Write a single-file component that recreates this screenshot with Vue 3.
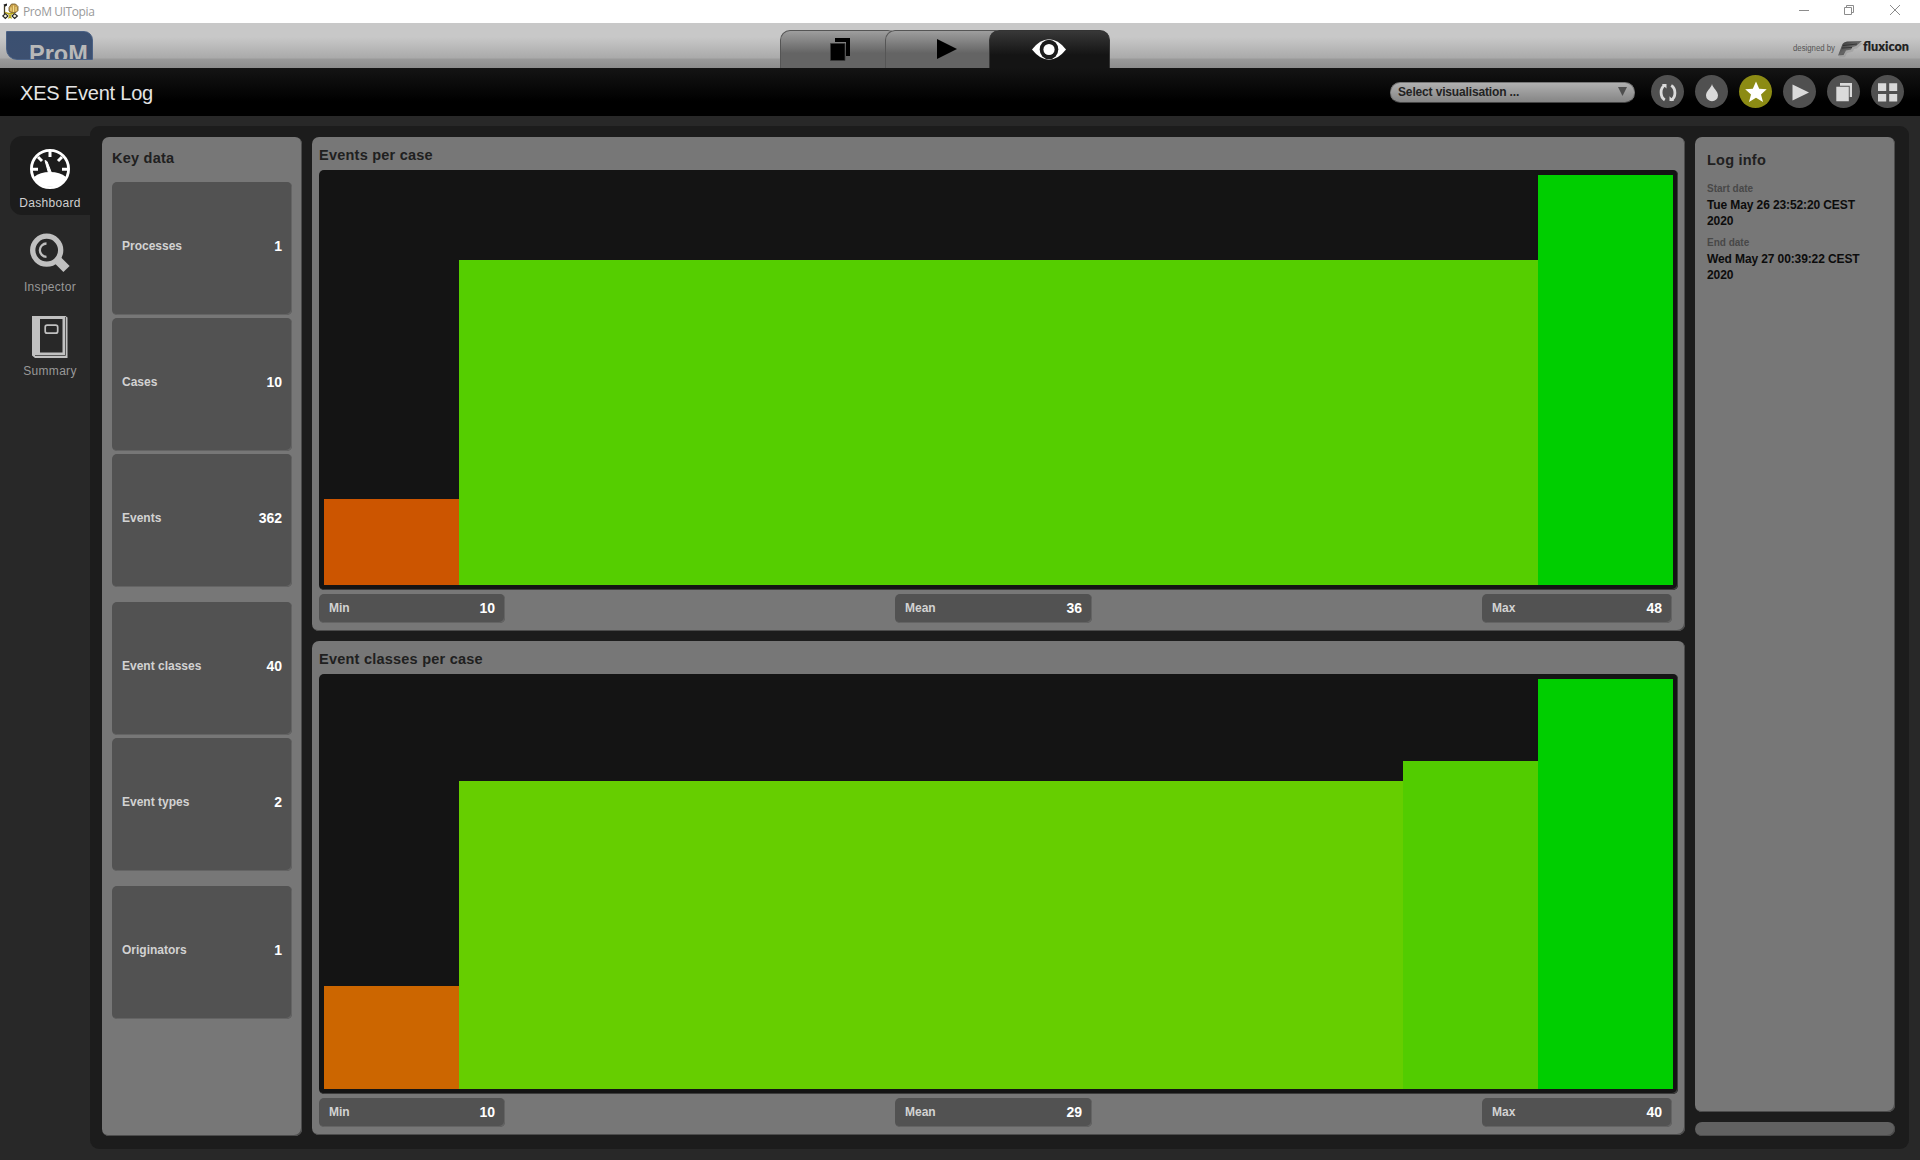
<script setup>
const groups = [
  [{ label: 'Processes', value: 1 }, { label: 'Cases', value: 10 }, { label: 'Events', value: 362 }],
  [{ label: 'Event classes', value: 40 }, { label: 'Event types', value: 2 }],
  [{ label: 'Originators', value: 1 }],
]

const charts = [
  {
    title: 'Events per case',
    bars: [
      { w: 135, h: 86, color: '#cc5500' },
      { w: 1079, h: 325, color: '#55ce00' },
      { w: 135, h: 410, color: '#00ce00' },
    ],
    min: 10, mean: 36, max: 48,
  },
  {
    title: 'Event classes per case',
    bars: [
      { w: 135, h: 103, color: '#cc6600' },
      { w: 944, h: 308, color: '#66ce00' },
      { w: 135, h: 328, color: '#52cc00' },
      { w: 135, h: 410, color: '#00ce00' },
    ],
    min: 10, mean: 29, max: 40,
  },
]
</script>

<template>
  <div class="window">
    <header class="titlebar">
      <svg class="app-icon" width="17" height="17" viewBox="0 0 17 17">
        <path d="M1.5 1.500 5 .5v2L2.500 4Z" fill="#222" />
        <path d="M2.500 3v8" stroke="#443c22" stroke-width="1.300" />
        <path d="M7 8V4.500L9.500 1h4L16 3.500v4l-2 2H9Z" fill="#c8a04c" stroke="#6b5424" stroke-width=".8" />
        <path d="M9 8V4.500M11.500 9V2.500M14 8V4" stroke="#f2dd8c" stroke-width="1" />
        <path d="M3 9.500l3 1h6" stroke="#b7a21c" stroke-width="1.400" fill="none" />
        <path d="m.8 13 2.500-2.300L6 13l-2.700 2.500ZM10 13l2.700-2.300 2.700 2.300-2.700 2.500Z" fill="#f6f4dd" stroke="#222" stroke-width="1.100" />
        <path d="m6.500 11 1.500 2-1.500 2.500M9.500 11 8 13l1.500 2.500" stroke="#b3a70e" stroke-width="1.200" fill="none" />
      </svg>
      <span class="app-title">ProM UITopia</span>
      <svg class="controls" width="103" height="12" viewBox="0 0 103 12" fill="none" stroke="#8c8c8c">
        <path d="M0 6.500h10M45.500 3.500h7v7h-7ZM47.500 3.500v-2h7v7h-2M91 1l10 10M101 1 91 11" />
      </svg>
    </header>

    <div class="topbar">
      <div class="logo"><span>ProM</span></div>
      <nav class="tabs">
        <div class="tab first">
          <svg width="20" height="24" viewBox="0 0 20 24">
            <path d="M5 0h15v18h-4V4H5Z" fill="#000" />
            <path d="M.5 5.500h14.500v17H.5Z" fill="#000" stroke="#3a3a3a" stroke-width=".8" />
          </svg>
        </div>
        <div class="tab second">
          <svg width="20" height="20" viewBox="0 0 20 20"><path d="M0 0l20 10L0 20Z" fill="#000" /></svg>
        </div>
        <div class="tab active">
          <svg width="34" height="21" viewBox="0 0 34 21">
            <path d="M0 10.500Q8 .3 17 .3t17 10.200Q26 20.700 17 20.700T0 10.500Z" fill="#fff" />
            <ellipse cx="17" cy="10.500" rx="9.300" ry="9.800" fill="#1c1c1c" />
            <circle cx="17" cy="10.500" r="5.600" fill="#fff" />
          </svg>
        </div>
      </nav>
      <svg class="brand" width="124" height="24" viewBox="0 0 124 24">
        <defs>
          <linearGradient id="wing" x1="0" x2="1" y2="1">
            <stop offset="0" stop-color="#333" />
            <stop offset=".5" stop-color="#666" />
            <stop offset="1" stop-color="#222" />
          </linearGradient>
        </defs>
        <text x="3" y="14.500" textLength="42" lengthAdjust="spacingAndGlyphs" class="by">designed by</text>
        <path d="M48 20 53 7.500Q54 6 57 6L72 5.500 66 11 63 11.500 62 14 56 15.500 54 19.500Z" fill="#999" opacity=".6" transform="translate(1 1.500)" />
        <path d="M48 19.500 52.500 8Q53.500 6 57 5.500L72 5 66 10 62.500 11 61 13.500 56 14.500 53.500 19Z" fill="url(#wing)" />
        <path d="M53 9.500 67 8M52 12l10-.5" stroke="#2a2a2a" stroke-width=".8" />
        <text x="73" y="14.500" textLength="46" lengthAdjust="spacingAndGlyphs" class="flux">fluxicon</text>
      </svg>
    </div>

    <div class="headbar">
      <h1>XES Event Log</h1>
      <div class="select">
        <span>Select visualisation ...</span>
        <svg width="9" height="9" viewBox="0 0 9 9"><path d="M0 0h9L4.500 9Z" fill="#4e4e4e" /></svg>
      </div>
      <div class="actions">
        <div class="round">
          <svg width="33" height="33" viewBox="0 0 33 33" fill="none" stroke="#dadada" stroke-width="2.800">
            <path d="M14 10.200C8.800 12.500 8.800 22 13.800 25M20 25c5.200-2.500 5.200-11.500.2-14.500" />
            <path d="M10.800 9h4.700v4.500ZM23.200 26h-4.700v-4.700Z" fill="#dadada" stroke="none" />
          </svg>
        </div>
        <div class="round">
          <svg width="33" height="33" viewBox="0 0 33 33"><path d="M17 9c.7 4 6 7 6 11.500a6 5.700 0 0 1-12 0C11 16 16.300 13 17 9Z" fill="#dadada" /></svg>
        </div>
        <div class="round star">
          <svg width="33" height="33" viewBox="0 0 33 33"><path d="M17 6.500l3.200 7.300 7.500.5-5.700 5.200 2 7.500-7-4.200-7 4.200 2-7.500-5.800-5.200 7.600-.5Z" fill="#fff" /></svg>
        </div>
        <div class="round">
          <svg width="33" height="33" viewBox="0 0 33 33"><path d="M9.500 9.500l16.500 8-16.500 8Z" fill="#dadada" /></svg>
        </div>
        <div class="round">
          <svg width="33" height="33" viewBox="0 0 33 33" fill="#dadada"><path d="M13 8h12v14h-2.300V10.800H13ZM9.300 11.800H21.800v14.500H9.300Z" /></svg>
        </div>
        <div class="round">
          <svg width="33" height="33" viewBox="0 0 33 33" fill="#dadada"><path d="M7 8.300h8.200v7.700H7ZM18.200 8.300h8v7.700h-8ZM7 19h8.200v7.500H7ZM18.200 19h8v7.500h-8Z" /></svg>
        </div>
      </div>
    </div>

    <main class="body">
      <aside class="side">
        <div class="nav on">
          <svg width="40" height="42" viewBox="0 0 40 42">
            <circle cx="20" cy="20" r="18.600" fill="none" stroke="#fff" stroke-width="2.800" />
            <path d="M4 28Q10 23 20 23t16 5a18 18 0 0 1-32 0Z" fill="#fff" />
            <path d="M20 2v6M8 8l4 4M32 8l-4 4M2 20.300h6M38 20.300h-6" stroke="#fff" stroke-width="3" />
            <path d="M15 11.500 17 12.500 21.500 24h-3Z" fill="#fff" stroke="#fff" />
          </svg>
          <span>Dashboard</span>
        </div>
        <div class="nav">
          <svg width="40" height="42" viewBox="0 0 40 42">
            <g transform="translate(0 .5)">
              <circle cx="16.700" cy="16.700" r="14" fill="none" stroke="#c0c0c0" stroke-width="5.300" />
              <path d="M16.500 10a6.500 6.500 0 0 0 0 13.300" fill="none" stroke="#c0c0c0" stroke-width="2.300" />
              <path d="M27 26 36.500 35.500" stroke="#c0c0c0" stroke-width="8.800" />
            </g>
          </svg>
          <span>Inspector</span>
        </div>
        <div class="nav">
          <svg class="book" width="40" height="42" viewBox="0 0 40 42">
            <path d="M2 0h33.500l2 1.500V42H5l-3-2.500Z" fill="#c0c0c0" />
            <path d="M10 3h22.500v33.500H10Z" fill="#282828" />
            <path d="M35.500 1v38.500H5" fill="none" stroke="#555" stroke-width="1" />
            <rect x="15.200" y="9.200" width="12.500" height="8" rx="2" fill="none" stroke="#c0c0c0" stroke-width="1.700" />
          </svg>
          <span>Summary</span>
        </div>
      </aside>

      <section class="stage">
        <div class="panel keydata">
          <h2>Key data</h2>
          <div v-for="(g, i) in groups" :key="i" class="group">
            <div v-for="t in g" :key="t.label" class="tile">
              <span>{{ t.label }}</span><b>{{ t.value }}</b>
            </div>
          </div>
        </div>

        <div class="center">
          <div v-for="c in charts" :key="c.title" class="panel chart">
            <h2>{{ c.title }}</h2>
            <div class="plot">
              <div
                v-for="(b, i) in c.bars"
                :key="i"
                class="bar"
                :style="{ width: b.w + 'px', height: b.h + 'px', background: b.color }"
              ></div>
            </div>
            <div class="stats">
              <div class="tile min"><span>Min</span><b>{{ c.min }}</b></div>
              <div class="tile mean"><span>Mean</span><b>{{ c.mean }}</b></div>
              <div class="tile max"><span>Max</span><b>{{ c.max }}</b></div>
            </div>
          </div>
        </div>

        <div class="right">
          <div class="panel log">
            <h2>Log info</h2>
            <h3>Start date</h3>
            <p>Tue May 26 23:52:20 CEST<br />2020</p>
            <h3>End date</h3>
            <p>Wed May 27 00:39:22 CEST<br />2020</p>
          </div>
          <div class="panel strip"></div>
        </div>
      </section>
    </main>
  </div>
</template>

<style>
body {
  background: #282828;
  overflow: hidden;
}
</style>

<style scoped>
* {
  box-sizing: border-box;
  margin: 0;
}
.window {
  width: 1920px;
  height: 1160px;
  display: flex;
  flex-direction: column;
  font-family: "Liberation Sans", Arial, sans-serif;
  overflow: hidden;
}
svg {
  display: block;
  flex: none;
}
.titlebar {
  height: 23px;
  background: #fff;
  display: flex;
  align-items: center;
  padding-left: 2px;
  flex: none;
}
.app-title {
  margin-left: 4px;
  font: 12px/23px "Open Sans", "Noto Sans", sans-serif;
  letter-spacing: -0.400px;
  color: #999;
}
.controls {
  margin-left: auto;
  margin-right: 18px;
  margin-top: -3px;
}
.topbar {
  height: 45px;
  flex: none;
  display: flex;
  background: linear-gradient(#c8c8c8 0, #c8c8c8 14px, #aaa 35px, #9a9a9a 36px, #8c8c8c 45px);
}
.logo {
  width: 87px;
  height: 29px;
  margin: 8px 0 0 6px;
  background: linear-gradient(#3b5071, #3d5070);
  border: 1px solid #4a6185;
  border-radius: 0 9px 0 11px;
  overflow: hidden;
  color: #b8b8b8;
  font-weight: bold;
  font-size: 23.500px;
  line-height: 24px;
  padding: 10px 0 0 22px;
}
.logo span {
  display: block;
}
.tabs {
  display: flex;
  align-items: flex-end;
  margin-left: 687px;
}
.tab {
  height: 38px;
  border: 1px solid #555;
  border-bottom: 0;
  border-radius: 10px 10px 0 0;
  background: linear-gradient(#9e9e9e, #646464 60%);
  display: flex;
  align-items: flex-start;
}
.first {
  width: 118px;
  padding: 7px 0 0 49px;
}
.second {
  width: 120px;
  margin-left: -13px;
  padding: 8px 0 0 51px;
}
.active {
  width: 121px;
  margin-left: -16px;
  border-color: #333;
  background: linear-gradient(#383838, #141414 65%);
  padding: 8px 0 0 42px;
}
.brand {
  margin-left: auto;
  margin-right: 6px;
  margin-top: 13px;
  overflow: visible;
}
.by {
  font-size: 8.500px;
  fill: #555;
}
.flux {
  font: 800 13px Lato, "Open Sans", sans-serif;
  fill: #222;
}
.headbar {
  height: 48px;
  flex: none;
  background: linear-gradient(#141414, #000 70%);
  display: flex;
  align-items: center;
  padding: 0 16px 1px 20px;
}
h1 {
  font-weight: normal;
  font-size: 20px;
  line-height: 24px;
  letter-spacing: -0.200px;
  color: #e4e4e4;
  margin-top: 2px;
}
.select {
  width: 245px;
  height: 21px;
  margin-left: auto;
  margin-top: 1px;
  border-radius: 10px;
  background: linear-gradient(#b0b0b0, #858585);
  border: 1px solid #777;
  border-bottom-color: #444;
  display: flex;
  align-items: center;
  justify-content: space-between;
  padding: 0 7px;
  color: #222;
  font-size: 12px;
  font-weight: bold;
  letter-spacing: -0.150px;
}
.select svg {
  margin-top: -2px;
}
.actions {
  display: flex;
  gap: 11px;
  margin-left: 16px;
}
.round {
  width: 33px;
  height: 33px;
  border-radius: 50%;
  background: #505050;
}
.star {
  background: #8c8b14;
}
.body {
  flex: 1;
  display: flex;
  background: #282828;
  padding: 10px 11px 11px 0;
}
.side {
  width: 90px;
  padding: 10px 0 0 10px;
}
.nav {
  height: 79px;
  margin-bottom: 5px;
  padding-top: 13px;
  display: flex;
  flex-direction: column;
  align-items: center;
  color: #999;
  font-size: 12px;
  line-height: 16px;
  letter-spacing: 0.300px;
}
.nav span {
  margin-top: 4px;
}
.nav .book {
  margin: -1px 0 1px;
}
.on {
  background: #1c1c1c;
  border-radius: 12px 0 0 12px;
  color: #d0d0d0;
}
.stage {
  flex: 1;
  background: #1c1c1c;
  border-radius: 9px;
  display: flex;
  gap: 10px;
  padding: 11px 14px 13px 12px;
}
.panel {
  background: #777;
  border-radius: 7px;
  box-shadow: inset -1px -1px 0 #4c4c4c;
}
h2 {
  font-size: 14.500px;
  line-height: 18px;
  letter-spacing: 0.230px;
  color: #202020;
}
.keydata {
  width: 200px;
  padding: 12px 10px 0;
}
.keydata h2 {
  margin-bottom: 15px;
}
.group {
  display: flex;
  flex-direction: column;
  gap: 3px;
  margin-bottom: 15px;
}
.group .tile {
  height: 133px;
}
.tile {
  background: #525252;
  border-radius: 5px;
  box-shadow: inset -1px -1px 0 #646464;
  display: flex;
  align-items: center;
  justify-content: space-between;
  padding: 0 10px;
}
.tile span {
  color: #d2d2d2;
  font-size: 12px;
  font-weight: bold;
  margin-top: -6px;
}
.tile b {
  color: #fff;
  font-size: 14px;
  margin-top: -5px;
}
.center {
  width: 1373px;
  display: flex;
  flex-direction: column;
  gap: 10px;
}
.chart {
  height: 494px;
  padding: 9px 7px 0;
}
.chart h2 {
  margin-bottom: 6px;
}
.plot {
  height: 420px;
  background: #141414;
  border-radius: 5px;
  box-shadow: inset -1px -1px 0 #3c3c3c;
  padding: 5px;
  display: flex;
  align-items: flex-end;
}
.bar {
  flex: none;
}
.stats {
  display: flex;
  justify-content: space-between;
  margin: 4px 6px 0 0;
}
.stats .tile {
  height: 29px;
}
.stats .tile span {
  margin-top: -2px;
}
.stats .tile b {
  margin-top: -1px;
}
.min {
  width: 186px;
}
.mean {
  width: 197px;
}
.max {
  width: 190px;
}
.right {
  width: 200px;
  display: flex;
  flex-direction: column;
  gap: 10px;
}
.log {
  height: 975px;
  padding: 14px 12px;
}
h3 {
  font-size: 10px;
  line-height: 14px;
  color: #484848;
  margin-top: 7px;
}
.log h2 + h3 {
  margin-top: 13px;
}
.log p {
  margin-top: 1px;
  font-size: 12px;
  font-weight: bold;
  line-height: 16px;
  letter-spacing: -0.110px;
  color: #0c0c0c;
  white-space: nowrap;
}
.strip {
  height: 14px;
  background: #616161;
}
</style>
